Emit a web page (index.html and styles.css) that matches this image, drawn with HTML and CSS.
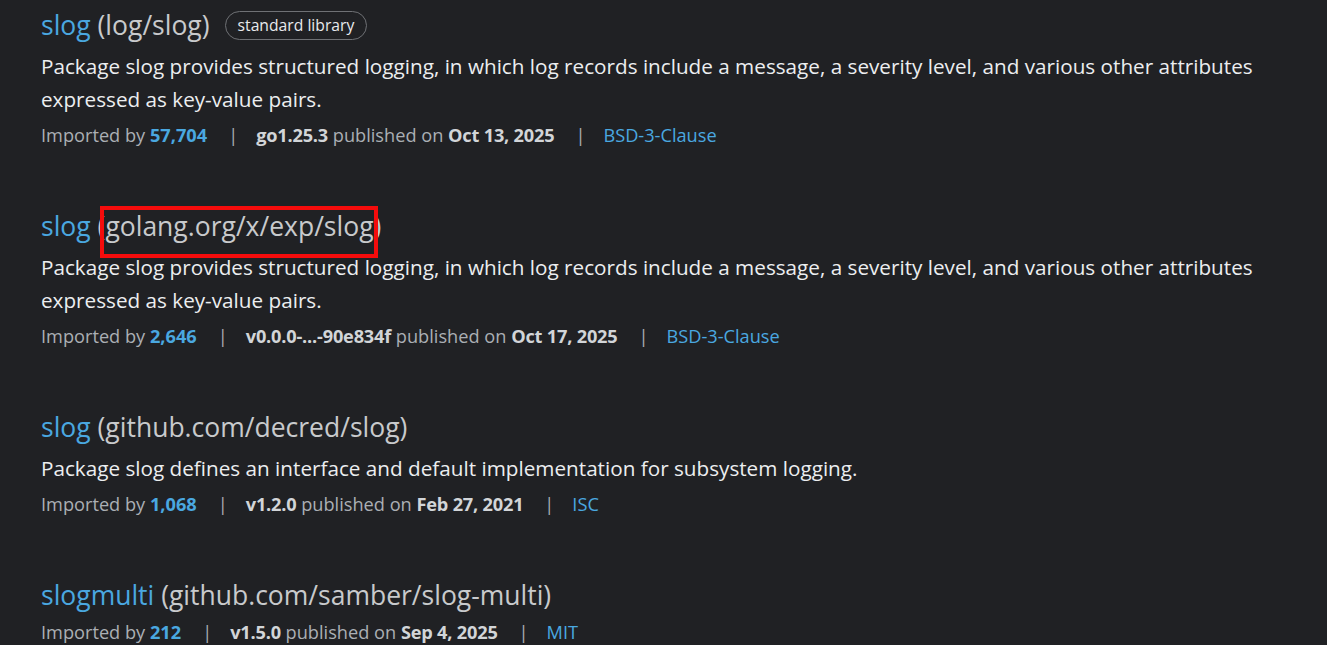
FILE: index.html
```html
<!DOCTYPE html>
<html lang="en">
<head>
<meta charset="utf-8">
<title>slog search results</title>
<link rel="stylesheet" href="styles.css">
</head>
<body>
<main class="results">
  <section class="result">
    <h2 class="title"><a class="name" href="#">slog</a> <span class="path">(log/slog)</span><span class="badge">standard library</span></h2>
    <p class="desc">Package slog provides structured logging, in which log records include a message, a severity level, and various other attributes expressed as key-value pairs.</p>
    <div class="meta">Imported by <a class="num" href="#">57,704</a><span class="sep">|</span><b>go1.25.3</b> published on <b>Oct 13, 2025</b><span class="sep">|</span><a class="lic" href="#">BSD-3-Clause</a></div>
  </section>
  <section class="result">
    <h2 class="title"><a class="name" href="#">slog</a> <span class="path">(<span class="mark">golang.org/x/exp/slog</span>)</span></h2>
    <p class="desc">Package slog provides structured logging, in which log records include a message, a severity level, and various other attributes expressed as key-value pairs.</p>
    <div class="meta">Imported by <a class="num" href="#">2,646</a><span class="sep">|</span><b>v0.0.0-...-90e834f</b> published on <b>Oct 17, 2025</b><span class="sep">|</span><a class="lic" href="#">BSD-3-Clause</a></div>
  </section>
  <section class="result">
    <h2 class="title"><a class="name" href="#">slog</a> <span class="path">(github.com/decred/slog)</span></h2>
    <p class="desc">Package slog defines an interface and default implementation for subsystem logging.</p>
    <div class="meta">Imported by <a class="num" href="#">1,068</a><span class="sep">|</span><b>v1.2.0</b> published on <b>Feb 27, 2021</b><span class="sep">|</span><a class="lic" href="#">ISC</a></div>
  </section>
  <section class="result">
    <h2 class="title"><a class="name" href="#">slogmulti</a> <span class="path">(github.com/samber/slog-multi)</span></h2>
    <div class="meta">Imported by <a class="num" href="#">212</a><span class="sep">|</span><b>v1.5.0</b> published on <b>Sep 4, 2025</b><span class="sep">|</span><a class="lic" href="#">MIT</a></div>
  </section>
</main>
</body>
</html>
```
FILE: styles.css
```css
html, body {
  margin: 0;
  padding: 0;
  background: #202124;
}
body {
  font-family: "Open Sans", "Noto Sans", "Liberation Sans", sans-serif;
  color: #e8eaed;
}
.results {
  padding: 7px 0 0 41px;
  display: flex;
  flex-direction: column;
  gap: 58px;
}
.result {
  display: flex;
  flex-direction: column;
}
.title {
  margin: 0 0 3px;
  font-size: 26.5px;
  font-weight: 400;
  line-height: 36px;
  white-space: nowrap;
}
.name {
  color: #4aa8e0;
  text-decoration: none;
}
.path {
  color: #c8cacc;
}
.mark {
  position: relative;
}
.mark::after {
  content: "";
  position: absolute;
  left: -5px;
  right: -4px;
  top: -2px;
  bottom: -14px;
  border: 4px solid #f50c0c;
  pointer-events: none;
}
.badge {
  display: inline-block;
  vertical-align: 4px;
  margin-left: 15px;
  font-size: 15.7px;
  line-height: 27px;
  padding: 0 12px;
  border: 1px solid #6f7175;
  border-radius: 15px;
  color: #e8eaed;
}
.desc {
  margin: 4px 0 0;
  font-size: 20.7px;
  line-height: 33px;
  max-width: 1240px;
  color: #eceef0;
}
.meta {
  margin-top: 4px;
  font-size: 18.2px;
  line-height: 30px;
  color: #abafb4;
  white-space: nowrap;
}
.title + .meta {
  margin-top: 1px;
}
.meta b {
  color: #d2d5d8;
  font-weight: 700;
  letter-spacing: -0.2px;
}
.num {
  color: #4aa8e0;
  font-weight: 700;
  text-decoration: none;
}
.lic {
  color: #4aa8e0;
  text-decoration: none;
}
.sep {
  display: inline-block;
  margin: 0 18px 0 21px;
  color: #abafb4;
}
```
